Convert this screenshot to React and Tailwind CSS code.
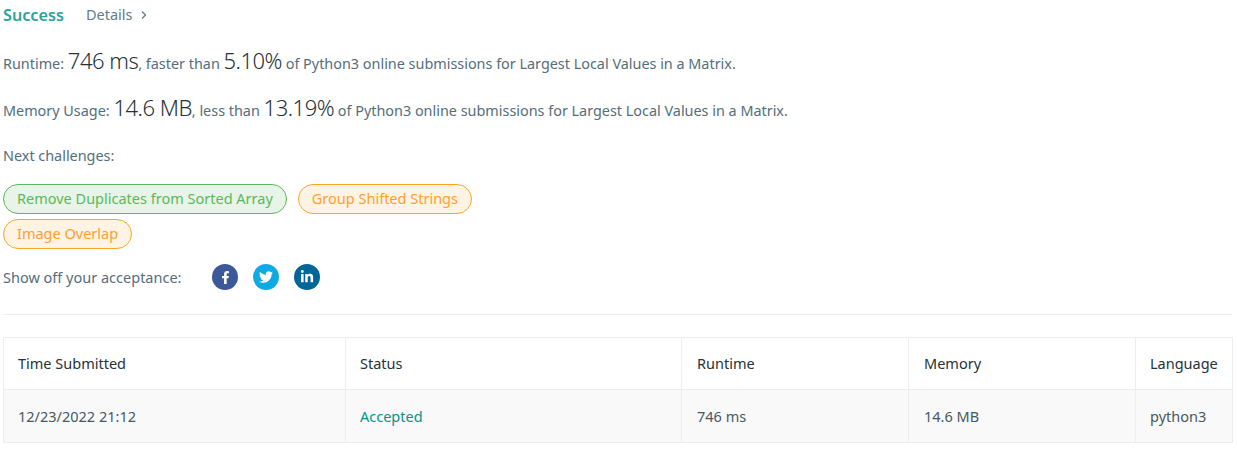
import { FaFacebookF, FaTwitter, FaLinkedinIn } from 'react-icons/fa';

function Stat({ label, value, middle, percent }) {
    return (
        <p className="h-[20px] whitespace-pre text-[14.4px] leading-[20px] text-[#546e7a]">
            {label}: <span className="text-[22px] font-light tracking-[-0.5px] text-[#263238]">{value}</span>, {middle} <span className="text-[22px] font-light tracking-[-0.5px] text-[#263238]">{percent}</span> of Python3 online submissions for Largest Local Values in a Matrix.
        </p>
    );
}

function Pill({ color, children }) {
    const cls = color === 'green'
        ? 'border-[#5cb85c] bg-[#e7f4e7] text-[#5cb85c]'
        : 'border-[#f9a825] bg-[#fff3e3] text-[#ffa033]';
    return <span className={`flex h-[30px] items-center rounded-[15px] border px-[13px] pb-[1px] text-[14.5px] ${cls}`}>{children}</span>;
}

function Social({ color, children }) {
    return <span className={`flex h-[26px] w-[26px] items-center justify-center rounded-full text-white ${color}`}>{children}</span>;
}

export default function App() {
    return (
        <div className="h-[453px] w-[1237px] overflow-hidden bg-white px-[3px] font-['Noto_Sans',sans-serif]">
            <div className="flex h-[30px] items-center text-[#607d8b]">
                <span className="text-[16.2px] font-semibold text-[#26a69a]">Success</span>
                <span className="ml-[22px] pb-[1px] text-[14.5px]">Details</span>
                <svg className="ml-[8px]" width="8" height="10" viewBox="0 0 8 10" fill="none" stroke="#607d8b" strokeWidth="1.3"><path d="M2 1.5 5.5 5 2 8.5" /></svg>
            </div>
            <div className="mt-[20px]">
                <Stat label="Runtime" value="746 ms" middle="faster than" percent="5.10%" />
            </div>
            <div className="mt-[27px]">
                <Stat label="Memory Usage" value="14.6 MB" middle="less than" percent="13.19%" />
            </div>
            <p className="mt-[29px] text-[14.4px] leading-[20px] text-[#546e7a]">Next challenges:</p>
            <div className="mt-[18px] flex gap-[11px]">
                <Pill color="green">Remove Duplicates from Sorted Array</Pill>
                <Pill color="orange">Group Shifted Strings</Pill>
            </div>
            <div className="mt-[5px] flex">
                <Pill color="orange">Image Overlap</Pill>
            </div>
            <div className="mt-[15px] flex items-center text-[14.5px] text-[#546e7a]">
                <span className="w-[209px] pt-[1px]">Show off your acceptance:</span>
                <div className="flex gap-[15px]">
                    <Social color="bg-[#3b5998]"><FaFacebookF size={13} /></Social>
                    <Social color="bg-[#0fa9e6]"><FaTwitter size={14} /></Social>
                    <Social color="bg-[#006599]"><FaLinkedinIn size={14} /></Social>
                </div>
            </div>
            <div className="mt-[24px] mr-[2px] border-t border-[#eeeeee]" />
            <table className="mt-[22px] w-[1229px] table-fixed border-collapse text-[14.5px]">
                <colgroup>
                    <col className="w-[342px]" />
                    <col className="w-[336px]" />
                    <col className="w-[227px]" />
                    <col className="w-[227px]" />
                    <col className="w-[97px]" />
                </colgroup>
                <thead>
                    <tr className="h-[52px] text-left text-[#263238]">
                        <th className="border border-[#eeeeee] pl-[14px] font-normal">Time Submitted</th>
                        <th className="border border-[#eeeeee] pl-[14px] font-normal">Status</th>
                        <th className="border border-[#eeeeee] pl-[15px] font-normal">Runtime</th>
                        <th className="border border-[#eeeeee] pl-[15px] font-normal">Memory</th>
                        <th className="border border-[#eeeeee] pl-[14px] font-normal">Language</th>
                    </tr>
                </thead>
                <tbody>
                    <tr className="h-[53px] bg-[#f9f9f9] text-[#455a64]">
                        <td className="border border-[#eeeeee] pl-[14px] pt-[2px]">12/23/2022 21:12</td>
                        <td className="border border-[#eeeeee] pl-[14px] pt-[2px] text-[#009688]">Accepted</td>
                        <td className="border border-[#eeeeee] pl-[15px] pt-[2px]">746 ms</td>
                        <td className="border border-[#eeeeee] pl-[15px] pt-[2px]">14.6 MB</td>
                        <td className="border border-[#eeeeee] pl-[14px] pt-[2px]">python3</td>
                    </tr>
                </tbody>
            </table>
        </div>
    );
}
